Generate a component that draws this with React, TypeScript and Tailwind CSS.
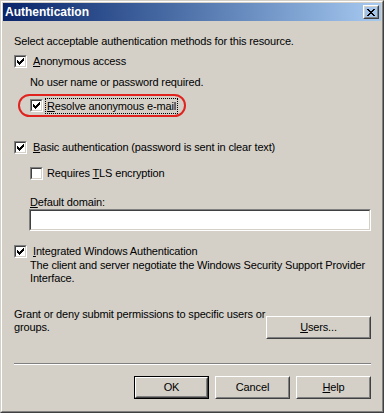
import type { ReactNode } from 'react';

// classic 3d edges
const raised =
  'border border-t-white border-l-white border-r-[#404040] border-b-[#404040]';
const raisedInner =
  'border border-t-[#d4d0c8] border-l-[#d4d0c8] border-r-[#808080] border-b-[#808080]';

function CheckBox({ checked }: { checked: boolean }) {
  return (
    <span className="inline-block w-[13px] h-[13px] shrink-0 border border-t-[#808080] border-l-[#808080] border-r-white border-b-white">
      <span className="flex w-[11px] h-[11px] items-center justify-center bg-white border border-t-[#404040] border-l-[#404040] border-r-[#d4d0c8] border-b-[#d4d0c8]">
        {checked && (
          <svg width="7" height="7" viewBox="0 0 7 7" shapeRendering="crispEdges">
            <path
              d="M6 0h1v1h-1z M5 1h2v1h-2z M0 2h1v1h-1z M4 2h3v1h-3z M0 3h2v1h-2z M3 3h3v1h-3z M0 4h5v1h-5z M1 5h3v1h-3z M2 6h1v1h-1z"
              fill="#000"
            />
          </svg>
        )}
      </span>
    </span>
  );
}

function Button({ children, width, isDefault }: { children: ReactNode; width: string; isDefault?: boolean }) {
  const face = (
    <span className={`flex h-full w-full ${raised}`}>
      <span className={`flex flex-1 items-center justify-center ${raisedInner}`}>{children}</span>
    </span>
  );
  if (isDefault) {
    return <div className={`${width} h-[23px] border border-black`}>{face}</div>;
  }
  return <div className={`${width} h-[23px]`}>{face}</div>;
}

export default function App() {
  return (
    <div
      className="w-[384px] h-[413px] bg-[#d4d0c8] text-black text-[11px] leading-[13px] tracking-[-0.15px] border border-t-[#d4d0c8] border-l-[#d4d0c8] border-r-[#404040] border-b-[#404040]"
      style={{ fontFamily: '"Liberation Sans", Arial, sans-serif' }}
    >
      <div className="h-full border border-t-white border-l-white border-r-[#808080] border-b-[#808080] p-px flex flex-col">
        {/* title bar */}
        <div className="h-[18px] shrink-0 flex items-center justify-between bg-gradient-to-r from-[#0a246a] to-[#a6caf0] pl-[2px] pr-[2px]">
          <span className="text-white font-bold text-[12px] tracking-normal">Authentication</span>
          <div className={`w-[16px] h-[14px] ${raised}`}>
            <div className={`w-full h-full flex items-center justify-center ${raisedInner}`}>
              <svg width="8" height="7" viewBox="0 0 8 7" shapeRendering="crispEdges">
                <path
                  d="M0 0h2v1h-2z M6 0h2v1h-2z M1 1h2v1h-2z M5 1h2v1h-2z M2 2h4v1h-4z M3 3h2v1h-2z M2 4h4v1h-4z M1 5h2v1h-2z M5 5h2v1h-2z M0 6h2v1h-2z M6 6h2v1h-2z"
                  fill="#000"
                />
              </svg>
            </div>
          </div>
        </div>

        {/* body */}
        <div className="flex flex-col pl-[11px] pr-[10px]">
          <p className="mt-[14px] h-[13px]">Select acceptable authentication methods for this resource.</p>

          <div className="mt-[7px] flex items-center gap-[6px] h-[13px]">
            <CheckBox checked />
            <span><u>A</u>nonymous access</span>
          </div>

          <p className="mt-[8px] ml-[16px] h-[13px]">No user name or password required.</p>

          <div className="relative mt-[10px] ml-[16px] flex items-center gap-[2px] h-[13px]">
            <div className="absolute left-[-12px] top-[-5px] w-[168px] h-[23px] rounded-[12px] border-2 border-[#e0231f]" />
            <CheckBox checked />
            <span className="border border-dotted border-black px-[1px] h-[16px] leading-[14px]">
              <u>R</u>esolve anonymous e-mail
            </span>
          </div>

          <div className="mt-[29px] flex items-center gap-[6px] h-[13px]">
            <CheckBox checked />
            <span><u>B</u>asic authentication (password is sent in clear text)</span>
          </div>

          <div className="mt-[13px] ml-[16px] flex items-center gap-[4px] h-[13px]">
            <CheckBox checked={false} />
            <span>Requires <u>T</u>LS encryption</span>
          </div>

          <p className="mt-[16px] ml-[16px] h-[13px]"><u>D</u>efault domain:</p>

          <div className="ml-[15px] w-[342px] h-[22px] border border-t-[#808080] border-l-[#808080] border-r-white border-b-white">
            <div className="w-full h-full bg-white border border-t-[#404040] border-l-[#404040] border-r-[#d4d0c8] border-b-[#d4d0c8]" />
          </div>

          <div className="mt-[14px] flex items-center gap-[6px] h-[13px]">
            <CheckBox checked />
            <span><u>I</u>ntegrated Windows Authentication</span>
          </div>
          <p className="mt-[1px] ml-[16px] whitespace-nowrap">
            The client and server negotiate the Windows Security Support Provider
            <br />
            Interface.
          </p>

          <div className="mt-[23px] flex items-start justify-between">
            <p className="whitespace-nowrap">
              Grant or deny submit permissions to specific users or
              <br />
              groups.
            </p>
            <div className="mt-[8px]">
              <Button width="w-[105px]">
                <span><u>U</u>sers...</span>
              </Button>
            </div>
          </div>

          <div className="mt-[24px] h-[2px] border-t border-t-[#808080] border-b border-b-white" />

          <div className="mt-[11px] flex justify-end gap-[6px]">
            <Button width="w-[75px]" isDefault>
              <span>OK</span>
            </Button>
            <Button width="w-[75px]">
              <span>Cancel</span>
            </Button>
            <Button width="w-[75px]">
              <span><u>H</u>elp</span>
            </Button>
          </div>
        </div>
      </div>
    </div>
  );
}
